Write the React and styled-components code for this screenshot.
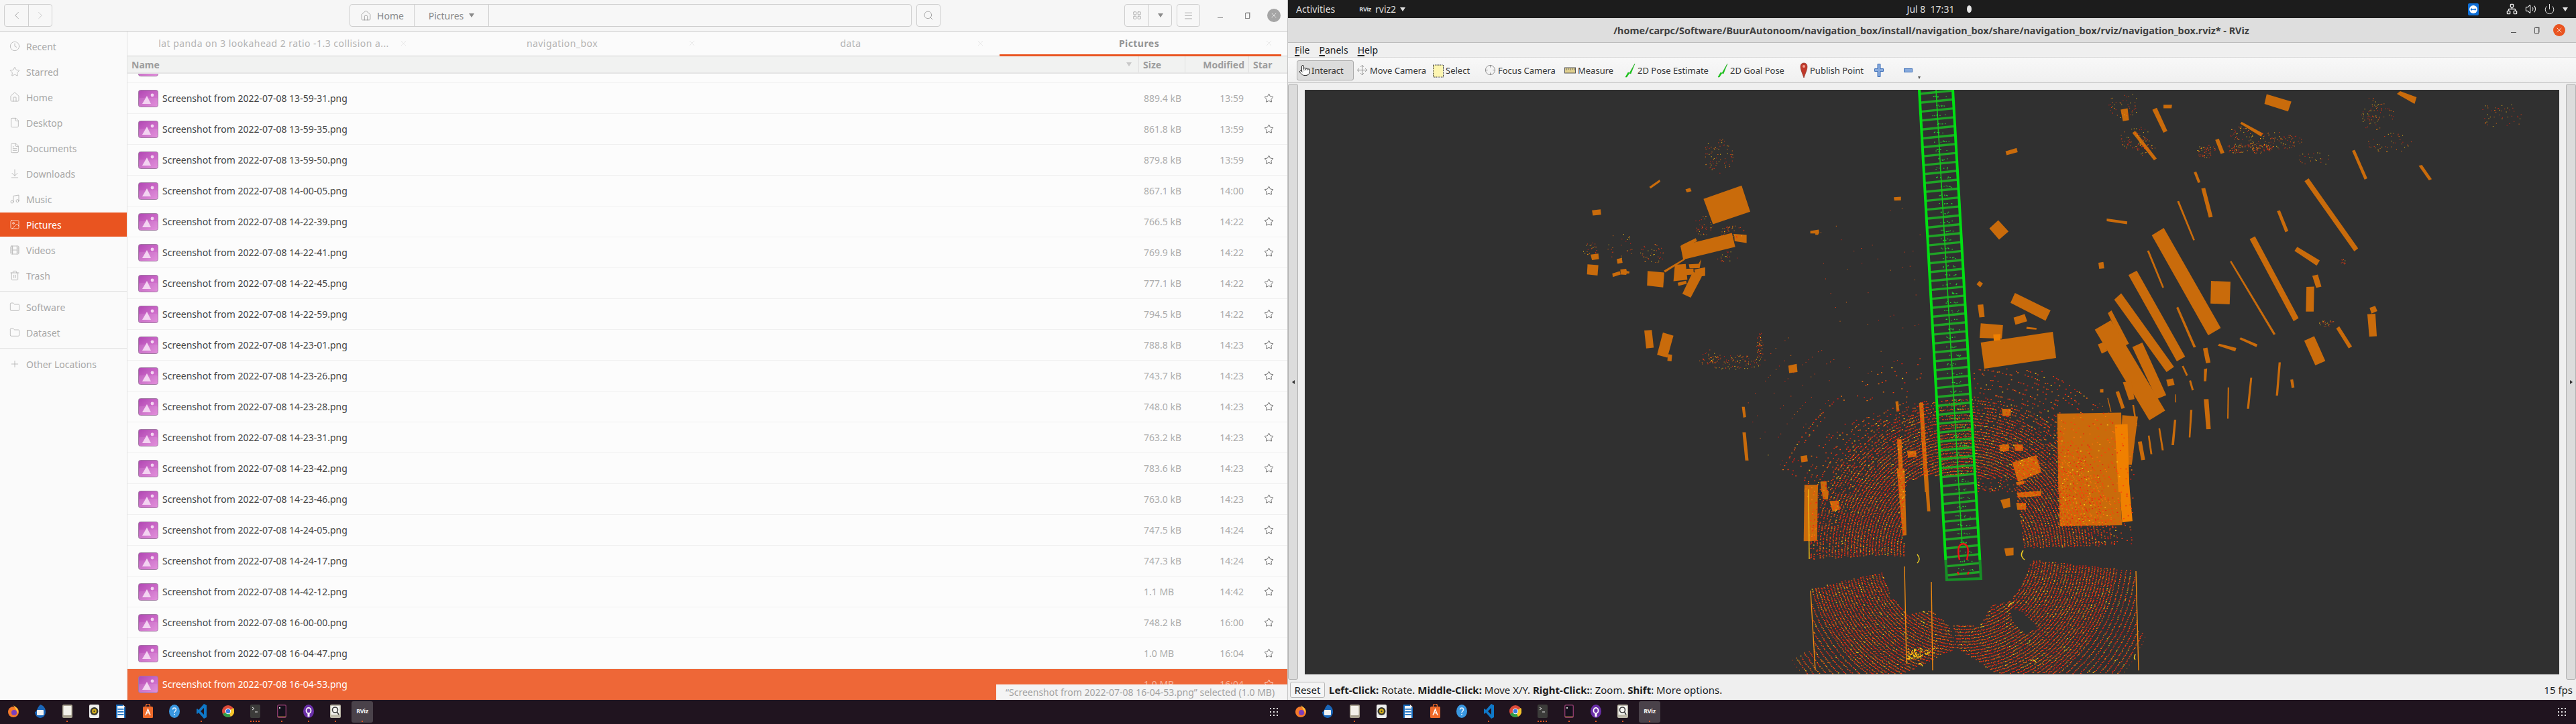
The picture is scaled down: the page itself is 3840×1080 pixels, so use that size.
import React, { useMemo } from "react";
import styled, { createGlobalStyle } from "styled-components";
import {
  ArrowDownToLine, ChevronLeft, ChevronRight, Clock, Crosshair, File, FileText, Film, Folder, House,
  LayoutGrid, Menu, Move, Music, Network, Image as ImageIcon, Plus, Pointer, Power, Search, Star,
  Trash2, Volume2, X,
} from "lucide-react";

const GlobalStyle = createGlobalStyle`
  html, body { margin: 0; padding: 0; background: #20141f; }
  body { font-family: "Noto Sans", "Open Sans", sans-serif; }
  * { box-sizing: border-box; }
`;

const Screen = styled.div`
  width: 3840px;
  height: 1080px;
  display: flex;
  flex-direction: column;
  overflow: hidden;
`;

const Monitors = styled.div`
  height: 1044px;
  display: grid;
  grid-template-columns: 1920px 1920px;
`;

/* ---------- files window ---------- */
const FilesWindow = styled.div`
  position: relative;
  display: flex;
  flex-direction: column;
  height: 1044px;
  overflow: hidden;
  background: #fcfcfc;
  border-right: 1px solid #c4c4c4;
`;

const FilesHeader = styled.div`
  height: 47px;
  flex: none;
  display: flex;
  align-items: center;
  padding: 0 0 0 6px;
  background: #f6f6f6;
  border-bottom: 1px solid #c8c8c8;
`;

const Spacer = styled.div`
  width: ${({ $w }) => $w}px;
  flex: none;
`;

const Group = styled.div`
  display: flex;
  height: 34px;
  border: 1px solid #cfcfcf;
  border-radius: 4px;
  background: #f7f7f7;
  ${({ $w }) => $w && `width: ${$w}px;`}
`;

const GroupCell = styled.div`
  width: ${({ $w }) => $w}px;
  display: flex;
  align-items: center;
  justify-content: center;
  gap: 8px;
  color: ${({ $dim }) => ($dim ? "#bcbcbc" : "#8a8a8a")};
  font-size: 14px;
  & + & { border-left: 1px solid #cfcfcf; }
`;

const Caret = styled.span`
  width: 0;
  height: 0;
  border-left: 4.5px solid transparent;
  border-right: 4.5px solid transparent;
  border-top: 6px solid ${({ $color }) => $color || "#8a8a8a"};
`;

const WinButton = styled.div`
  width: ${({ $w }) => $w || 40}px;
  display: flex;
  justify-content: center;
  align-items: center;
  flex: none;
`;

const MinGlyph = styled.span`
  width: 8px;
  height: 1px;
  margin-top: 6px;
  background: ${({ $color }) => $color};
`;

const MaxGlyph = styled.span`
  width: 7px;
  height: 9px;
  border: 1px solid ${({ $color }) => $color};
  box-shadow: 1px -1px 0 -0.5px ${({ $color }) => $color};
`;

const CloseDisc = styled.span`
  width: ${({ $size }) => $size}px;
  height: ${({ $size }) => $size}px;
  border-radius: 50%;
  background: ${({ $color }) => $color};
  display: flex;
  align-items: center;
  justify-content: center;
  color: #fff;
`;

const FilesBody = styled.div`
  flex: 1;
  min-height: 0;
  display: flex;
`;

const Sidebar = styled.nav`
  width: 190px;
  flex: none;
  padding-top: 3px;
  background: #fafafa;
  border-right: 1px solid #e2e2e2;
`;

const SideItem = styled.div`
  height: 38px;
  border-top: 1px solid transparent;
  border-bottom: 1px solid transparent;
  background-clip: padding-box;
  display: flex;
  align-items: center;
  gap: 9px;
  padding-left: 14px;
  font-size: 14px;
  color: ${({ $active }) => ($active ? "#ffffff" : "#a8a8a8")};
  background-color: ${({ $active }) => ($active ? "#e95420" : "transparent")};
  svg { flex: none; }
`;

const SideRule = styled.div`
  height: 9px;
  position: relative;
  &::after {
    content: "";
    position: absolute;
    left: 0;
    right: 0;
    top: 4px;
    height: 1px;
    background: #e2e2e2;
  }
`;

const Content = styled.div`
  flex: 1;
  min-width: 0;
  display: flex;
  flex-direction: column;
`;

const TabStrip = styled.div`
  height: 37px;
  flex: none;
  display: flex;
  padding-right: 9px;
  background: #fbfbfb;
  border-bottom: 1px solid #cdcdcd;
`;

const Tab = styled.div`
  flex: 1;
  min-width: 0;
  margin-left: 10px;
  height: 37px;
  display: grid;
  grid-template-columns: 30px 1fr 30px;
  align-items: center;
  justify-items: center;
  font-size: 14px;
  letter-spacing: 0.45px;
  padding-right: 4px;
  font-weight: ${({ $active }) => ($active ? 700 : 400)};
  color: ${({ $active }) => ($active ? "#939393" : "#b4b4b4")};
  border-bottom: 3px solid ${({ $active }) => ($active ? "#e95420" : "transparent")};
  svg { color: #dcdcdc; }
`;

const ColumnHeader = styled.div`
  height: 26px;
  flex: none;
  display: grid;
  grid-template-columns: 1fr 69px 95px 58px;
  background: #f1f2f1;
  border-bottom: 2px solid #e5e5e5;
  font-size: 14px;
  font-weight: 700;
  color: #9d9d9d;
`;

const ColumnCell = styled.div`
  display: flex;
  align-items: center;
  padding: 0 6px;
  justify-content: ${({ $right }) => ($right ? "flex-end" : "flex-start")};
  & + & { border-left: 1px solid #dfdfdf; }
`;

const NameCell = styled(ColumnCell)`
  justify-content: space-between;
  padding-right: 10px;
`;

const RowList = styled.div`
  flex: 1;
  min-height: 0;
  overflow: hidden;
`;

const RowScroll = styled.div`
  margin-top: -32px;
`;

const FileRow = styled.div`
  height: 46px;
  display: grid;
  grid-template-columns: 1fr 69px 95px 58px;
  align-items: center;
  font-size: 14px;
  border-bottom: 1px solid ${({ $selected }) => ($selected ? "#ee6737" : "#f0f0f0")};
  background: ${({ $selected }) => ($selected ? "#ee6737" : "transparent")};
`;

const FileName = styled.div`
  display: flex;
  align-items: center;
  gap: 6px;
  padding-left: 16px;
  color: ${({ $selected }) => ($selected ? "#ffffff" : "#454545")};
`;

const SizeCell = styled.div`
  padding-left: 8px;
  color: ${({ $selected }) => ($selected ? "#f7b79f" : "#acacac")};
`;

const TimeCell = styled.div`
  text-align: right;
  padding-right: 7px;
  color: ${({ $selected }) => ($selected ? "#f7b79f" : "#acacac")};
`;

const StarCell = styled.div`
  display: flex;
  justify-content: center;
  padding-left: 2px;
  color: ${({ $selected }) => ($selected ? "#ffffff" : "#4a4a4a")};
`;

const StatusOverlay = styled.div`
  position: absolute;
  right: 0;
  bottom: 0;
  width: 434px;
  height: 23px;
  display: flex;
  align-items: center;
  padding-left: 14px;
  font-size: 14px;
  color: #a3a3a3;
  background: #f4f4f4;
`;

/* ---------- rviz window ---------- */
const RvizWindow = styled.div`
  display: flex;
  flex-direction: column;
  height: 1044px;
  background: #efefef;
`;

const TopBar = styled.div`
  height: 27px;
  flex: none;
  display: grid;
  grid-template-columns: 1fr auto 1fr;
  align-items: center;
  padding: 0 12px;
  background: #1c1c1c;
  color: #dedede;
  font-size: 14px;
`;

const TopLeft = styled.div`
  display: flex;
  align-items: center;
`;

const TopApp = styled.div`
  display: flex;
  align-items: center;
  gap: 6px;
  margin-left: 36px;
`;

const RvizMark = styled.span`
  font-size: 9px;
  font-weight: 700;
  color: ${({ $color }) => $color || "#dedede"};
  letter-spacing: -0.3px;
`;

const TopClock = styled.div`
  display: flex;
  align-items: center;
  gap: 8px;
  margin-left: 22px;
`;

const ClockDot = styled.span`
  width: 7px;
  height: 11px;
  margin-left: 11px;
  border-radius: 50%;
  background: #e6e6e6;
`;

const Tray = styled.div`
  display: flex;
  align-items: center;
  justify-content: flex-end;
  gap: 11px;
  color: #e6e6e6;
`;

const TitleBar = styled.div`
  height: 37px;
  flex: none;
  position: relative;
  display: flex;
  align-items: center;
  justify-content: center;
  padding-right: 2px;
  background: #dedede;
  border-bottom: 1px solid #bcbcbc;
  font-size: 14.4px;
  font-weight: 700;
  color: #404040;
`;

const TitleButtons = styled.div`
  position: absolute;
  right: 0;
  top: 0;
  height: 36px;
  display: flex;
  align-items: center;
  padding-right: 8px;
  gap: 0;
`;

const MenuBar = styled.div`
  height: 22px;
  flex: none;
  display: flex;
  align-items: center;
  gap: 14px;
  padding-left: 10px;
  font-size: 14px;
  color: #222;
  border-bottom: 1px solid #d8d8d8;
`;

const Mnemonic = styled.span`
  text-decoration: underline;
  text-decoration-thickness: 2px;
  text-underline-offset: 2px;
`;

const Toolbar = styled.div`
  height: 38px;
  flex: none;
  display: flex;
  align-items: center;
  position: relative;
  padding-left: 13px;
  background: linear-gradient(#f8f8f8, #f0f0f0);
  border-bottom: 1px solid #bdbdbd;
  font-size: 13px;
  color: #333;
`;

const ToolItem = styled.div`
  width: ${({ $w }) => $w}px;
  flex: none;
  height: 30px;
  display: flex;
  align-items: center;
  gap: ${({ $gap }) => $gap ?? 3}px;
  padding-left: ${({ $pad }) => $pad || 0}px;
  ${({ $active }) => $active && "background: #dcdcdc; border: 1px solid #a9a9a9; border-radius: 3px;"}
`;

const MoreCaret = styled.span`
  position: absolute;
  left: 939px;
  top: 28px;
  width: 0;
  height: 0;
  border-left: 2.5px solid transparent;
  border-right: 2.5px solid transparent;
  border-top: 4px solid #555;
`;

const MainRow = styled.div`
  height: 890px;
  flex: none;
  display: grid;
  grid-template-columns: 15px 1870px 15px;
  column-gap: 10px;
`;

const SideHandle = styled.div`
  margin-top: 1px;
  display: flex;
  align-items: center;
  justify-content: center;
  background: #dcdcdc;
  border: 1px solid #b2b2b2;
  border-radius: 3px;
`;

const HandleArrow = styled.span`
  width: 0;
  height: 0;
  border-top: 3px solid transparent;
  border-bottom: 3px solid transparent;
  ${({ $right }) => ($right ? "border-left" : "border-right")}: 4px solid #333;
`;

const Viewport = styled.div`
  margin-top: 10px;
  height: 872px;
  background: #303030;
  overflow: hidden;
`;

const StatusBar = styled.div`
  height: 30px;
  flex: none;
  display: flex;
  align-items: center;
  padding: 0 5px 0 3px;
  font-size: 15px;
  color: #1c1c1c;
`;

const ResetButton = styled.div`
  width: 52px;
  height: 24px;
  margin-right: 6px;
  display: flex;
  align-items: center;
  justify-content: center;
  background: #f5f5f5;
  border: 1px solid #b8b8b8;
  border-radius: 3px;
`;

const StatusText = styled.div`
  flex: 1;
  b { font-weight: 700; }
`;

/* ---------- dock ---------- */
const DockRow = styled.div`
  height: 36px;
  display: grid;
  grid-template-columns: 1920px 1920px;
  background: #20141f;
`;

const Dock = styled.div`
  display: flex;
  align-items: center;
  height: 36px;
  position: relative;
  margin-left: ${({ $offset }) => $offset || 0}px;
`;

const DockSlot = styled.div`
  position: relative;
  width: 40px;
  height: 36px;
  flex: none;
  display: flex;
  align-items: center;
  justify-content: center;
  padding-bottom: 3px;
`;

const DockTile = styled.div`
  position: absolute;
  left: 4px;
  top: 2px;
  width: 32px;
  height: 32px;
  border-radius: 3px;
  background: #4a424a;
`;

const DockGlyph = styled.span`
  position: relative;
  display: flex;
`;

const DockDots = styled.div`
  position: absolute;
  bottom: 3px;
  left: 0;
  right: 0;
  display: flex;
  justify-content: center;
  gap: 2px;
`;

const DockDot = styled.span`
  width: 2px;
  height: 2px;
  background: #e95420;
`;

const AppGrid = styled.div`
  margin-left: auto;
  margin-right: 15px;
  display: grid;
  grid-template-columns: repeat(3, 2.5px);
  gap: 2.5px;
`;

const GridDot = styled.span`
  width: 2.5px;
  height: 2.5px;
  background: #e6e6e6;
`;

/* ---------- data ---------- */
const rows = [
  ["13-59-20", "", ""],
  ["13-59-31", "889.4 kB", "13:59"],
  ["13-59-35", "861.8 kB", "13:59"],
  ["13-59-50", "879.8 kB", "13:59"],
  ["14-00-05", "867.1 kB", "14:00"],
  ["14-22-39", "766.5 kB", "14:22"],
  ["14-22-41", "769.9 kB", "14:22"],
  ["14-22-45", "777.1 kB", "14:22"],
  ["14-22-59", "794.5 kB", "14:22"],
  ["14-23-01", "788.8 kB", "14:23"],
  ["14-23-26", "743.7 kB", "14:23"],
  ["14-23-28", "748.0 kB", "14:23"],
  ["14-23-31", "763.2 kB", "14:23"],
  ["14-23-42", "783.6 kB", "14:23"],
  ["14-23-46", "763.0 kB", "14:23"],
  ["14-24-05", "747.5 kB", "14:24"],
  ["14-24-17", "747.3 kB", "14:24"],
  ["14-42-12", "1.1 MB", "14:42"],
  ["16-00-00", "748.2 kB", "16:00"],
  ["16-04-47", "1.0 MB", "16:04"],
  ["16-04-53", "1.0 MB", "16:04"],
];

const sideTop = [
  ["Recent", Clock], ["Starred", Star], ["Home", House], ["Desktop", File], ["Documents", FileText],
  ["Downloads", ArrowDownToLine], ["Music", Music], ["Pictures", ImageIcon], ["Videos", Film], ["Trash", Trash2],
];

const dockApps = [
  ["firefox", 0], ["mail", 0], ["files", 1], ["sound", 0], ["writer", 0], ["store", 0], ["help", 0],
  ["code", 1], ["chrome", 0], ["term", 4], ["dark", 1], ["github", 1], ["finder", 1], ["rviz", 1],
];

/* ---------- 3d view: obstacles in crop coordinates, mapped by the group transform ---------- */
const z9 = "translate(2250 134) scale(0.4146 0.3827)";
const z10 = "translate(2900 134) scale(0.4146 0.3827)";
const z7 = "translate(2400 700) scale(0.574 0.3333)";
const z4 = "translate(2880 0) scale(0.6122 0.3333)";

const boxes9 = [
  "503,378 540,350 543,358 508,385", "633,388 650,382 655,395 638,400", "297,470 328,466 330,487 300,490",
  "698,425 835,373 866,475 732,524", "615,608 800,558 812,612 625,662", "617,606 670,578 675,590 625,615",
  "808,562 853,565 853,597 810,590", "292,642 320,638 322,660 297,664", "386,660 404,655 407,674 389,678",
  "281,680 320,683 317,724 279,719", "370,716 397,707 400,720 372,730",
  "399,700 420,698 422,706 432,708 431,716 422,716 420,721 400,720", "497,706 557,712 553,770 495,763",
  "555,705 628,658 632,662 560,712", "595,682 634,679 640,740 590,746", "635,698 662,697 662,720 635,722",
  "645,680 680,678 690,660 684,695 648,696", "665,700 704,692 704,725 670,730", "605,752 635,744 638,756 608,764",
  "660,708 692,728 652,810 622,795", "485,938 512,936 519,1005 492,1008", "552,946 590,958 568,1044 531,1033",
  "570,1030 585,1033 583,1058 568,1056", "1003,1075 1033,1068 1036,1100 1006,1104",
  "1082,550 1112,545 1114,556 1110,565 1100,565 1100,560 1082,560", "1382,419 1408,417 1408,431 1384,432",
  "836,1235 846,1235 851,1275 841,1278", "838,1335 850,1335 860,1445 848,1445",
  "1047,1428 1070,1424 1073,1448 1050,1452", "1062,1542 1110,1540 1108,1568 1060,1568",
  "1118,1528 1140,1526 1142,1568 1122,1568", "1388,1215 1398,1213 1402,1252 1392,1254",
  "1394,1362 1410,1362 1418,1568 1404,1568", "1473,1220 1488,1218 1508,1568 1494,1568",
  "1430,1410 1462,1406 1464,1430 1434,1434",
];

const boxes10 = [
  "216,240 256,227 260,243 220,255", "630,77 655,72 660,118 638,122", "744,78 760,70 798,160 784,167",
  "784,58 815,58 813,72 784,72", "672,168 682,160 760,268 750,275", "1155,17 1244,46 1232,84 1147,55",
  "1060,132 1065,125 1142,170 1135,182", "970,195 983,190 1003,245 990,250", "1462,238 1472,234 1517,345 1507,350",
  "893,322 902,318 917,360 908,363", "920,385 934,382 961,495 947,498", "833,435 840,433 897,585 891,587",
  "580,502 654,513 653,524 580,512", "1192,473 1203,470 1233,550 1222,555", "1291,356 1306,345 1484,618 1470,630",
  "158,540 190,508 227,552 193,584", "1255,628 1265,612 1346,665 1335,685", "742,567 785,538 990,928 945,957",
  "725,628 732,626 786,770 780,772", "1094,582 1113,571 1270,890 1252,902", "1023,670 1028,666 1187,952 1180,956",
  "550,674 568,671 571,696 553,698", "112,758 122,745 135,755 125,770", "658,722 688,705 862,1040 832,1058",
  "1319,725 1339,720 1352,767 1333,772", "1298,768 1326,767 1324,864 1296,864", "955,745 1025,748 1022,836 953,833",
  "607,818 632,793 822,1080 795,1100", "234,830 250,792 378,860 360,900", "116,838 136,836 141,885 122,887",
  "245,888 285,874 294,902 252,916", "830,850 837,845 901,1003 892,1005", "584,870 597,860 660,990 640,1000",
  "292,924 328,928 327,935 291,932", "127,910 207,917 203,970 123,967", "127,985 386,943 398,1045 140,1087",
  "537,935 595,898 790,1250 733,1288", "548,992 573,982 582,1018 562,1028", "672,1003 708,985 794,1190 760,1205",
  "1057,972 1062,965 1122,992 1118,1003", "979,997 985,990 1046,1006 1042,1020", "926,1008 942,1005 953,1063 937,1066",
  "1290,978 1326,960 1366,1057 1330,1074", "1405,930 1416,922 1462,1000 1450,1008", "1525,850 1545,842 1553,862 1532,872",
  "1517,875 1546,873 1551,960 1524,962", "850,1078 856,1075 872,1112 866,1116", "930,1088 941,1086 938,1136 929,1136",
  "876,1134 883,1132 893,1170 886,1172", "794,1130 818,1125 824,1150 800,1156", "825,1187 828,1187 830,1218 826,1218",
  "556,1167 568,1166 568,1180 556,1180", "612,1178 624,1174 645,1240 633,1244", "638,1140 668,1135 680,1205 660,1210",
  "582,1202 585,1201 597,1255 594,1256", "672,1228 678,1228 690,1310 684,1310", "1198,1062 1206,1062 1196,1192 1188,1192",
  "1096,1122 1103,1122 1092,1243 1084,1243", "1240,1130 1250,1128 1255,1160 1245,1163", "1015,1160 1020,1160 1018,1282 1013,1282",
  "929,1206 946,1205 954,1322 938,1323", "880,1248 888,1248 881,1355 875,1355", "822,1286 830,1286 822,1385 813,1385",
  "766,1320 772,1319 785,1405 778,1405", "728,1348 734,1347 744,1420 737,1420", "692,1372 706,1370 718,1442 704,1444",
  "203,1244 235,1243 235,1270 206,1272", "402,1262 632,1258 640,1568 406,1568", "636,1268 692,1274 670,1462 626,1460",
  "193,1385 228,1380 230,1408 197,1410", "248,1382 278,1382 280,1408 250,1408", "240,1452 326,1425 345,1490 260,1525",
  "253,1530 280,1524 283,1534 258,1542",
];

const bright10 = ["609,1305 655,1303 662,1568 622,1568", "172,954 198,952 198,976 174,978"];

const boxes7 = [
  "1165,0 1320,0 1330,250 1168,255", "505,70 540,70 538,320 503,322", "548,55 562,55 562,95 550,100",
  "550,97 568,97 566,135 553,135", "570,142 594,140 597,180 578,190", "745,0 765,0 770,295 760,297",
  "815,0 825,0 832,188 824,188", "1052,0 1100,0 1118,15 1060,55", "1055,60 1076,50 1076,65 1058,72",
  "1014,138 1038,128 1040,168 1022,176", "1056,105 1120,97 1120,120 1060,126", "1055,150 1080,150 1080,180 1058,182",
  "1024,355 1048,350 1048,385 1028,388",
];

const bright7 = ["1320,0 1345,0 1357,232 1330,238"];

const boxes4 = ["1132,420 1140,408 1180,435 1175,465", "1185,742 1193,738 1217,802 1210,807"];

const map7 = ([x, y]) => [2400 + x * 0.574, 700 + y / 3];
const map9 = ([x, y]) => [2250 + x * 0.4146, 134 + y * 0.3827];
const map10 = ([x, y]) => [2900 + x * 0.4146, 134 + y * 0.3827];
const map4 = ([x, y]) => [2880 + x * 0.6122, y / 3];

const zones = [
  { fade: true, p: 1, poly: [[515, 405], [510, 100], [455, 0], [460, -30], [600, -200], [760, -300], [900, -310], [900, 30], [820, 30], [770, 60], [760, 200], [765, 390], [700, 385]].map(map7) },
  { fade: true, p: 1, poly: [[900, -310], [1100, -350], [1400, -200], [1360, 0], [1357, 340], [1110, 352], [1075, 350], [1060, 170], [1050, 40], [900, 30]].map(map7) },
  { p: 1, poly: [[520, 535], [710, 460], [725, 560], [770, 650], [830, 630], [880, 700], [900, 800], [760, 917], [450, 917], [470, 850], [530, 800]].map(map7) },
  { p: 1, poly: [[1095, 405], [1360, 455], [1370, 720], [1410, 760], [1370, 917], [1000, 917], [900, 800], [890, 700], [960, 700], [990, 610], [1040, 590], [1080, 480]].map(map7) },
  { p: 0.42, poly: [[880, 830], [1160, 1040], [1170, 1220], [1000, 1490], [930, 1470], [820, 1215], [1000, 900]].map(map9) },
  { p: 0.12, poly: [[1100, 500], [1480, 400], [1480, 1200], [1170, 1220]].map(map9) },
  { p: 0.35, poly: [[100, 1080], [400, 1100], [650, 1300], [400, 1568], [100, 1568]].map(map10) },
];

const hole = [[1040, 620], [1070, 640], [1110, 710], [1075, 735], [1040, 670]].map(map7);

const clusters = [
  [map9, 750, 260, 55, 70, 70], [map9, 700, 530, 35, 40, 35], [map9, 800, 555, 45, 25, 40], [map9, 780, 650, 40, 25, 20],
  [map9, 510, 640, 45, 40, 40], [map9, 400, 610, 50, 55, 24], [map9, 290, 620, 28, 28, 22], [map9, 800, 1060, 120, 30, 110],
  [map9, 900, 1000, 12, 65, 50], [map9, 730, 1040, 40, 28, 18], [map10, 640, 60, 55, 50, 45], [map10, 680, 190, 55, 50, 70],
  [map10, 720, 230, 35, 35, 25], [map10, 940, 240, 38, 28, 55], [map10, 1090, 230, 85, 22, 120], [map10, 1180, 200, 105, 35, 100],
  [map10, 1060, 170, 38, 28, 35], [map10, 1330, 270, 65, 28, 22], [map10, 1530, 80, 38, 55, 30], [map10, 1370, 910, 28, 16, 25],
  [map10, 1430, 670, 10, 10, 10], [map4, 1385, 515, 65, 55, 45], [map4, 1080, 520, 45, 65, 45], [map4, 1115, 640, 55, 45, 40],
];

const inside = (x, y, poly) => {
  let hit = false;
  for (let i = 0, j = poly.length - 1; i < poly.length; j = i++) {
    const [xi, yi] = poly[i];
    const [xj, yj] = poly[j];
    if (yi > y !== yj > y && x < ((xj - xi) * (y - yi)) / (yj - yi) + xi) hit = !hit;
  }
  return hit;
};

const makeRandom = (seed) => () => {
  seed = (seed + 0x6d2b79f5) | 0;
  let t = Math.imul(seed ^ (seed >>> 15), 1 | seed);
  t = (t + Math.imul(t ^ (t >>> 7), 61 | t)) ^ t;
  return ((t ^ (t >>> 14)) >>> 0) / 4294967296;
};

// scan rings round the car plus loose clusters, one path per colour and dot size
const buildCloud = () => {
  const rnd = makeRandom(4242);
  const palette = ["#ff3c0e", "#ff720a", "#f01c10", "#ffc814"];
  const coarse = palette.map(() => []);
  const fine = palette.map(() => []);
  const put = (target, x, y, warm, len) => {
    const pick = rnd();
    let slot = 0;
    if (pick > 0.95 - warm) slot = 3;
    else if (pick > 0.7 - warm) slot = 1;
    else if (pick < 0.22) slot = 2;
    target[slot].push(`M${x.toFixed(1)} ${y.toFixed(1)}h${len}`);
  };
  const cx = 2925;
  const cy = 823;
  for (let r = 70; r < 640; r += r < 230 ? 4.6 : r < 300 ? 7 : 22) {
    const ds = r < 230 ? 2.3 : r < 300 ? 2.8 : 6;
    for (let a = 0; a < Math.PI * 2; a += ds / r) {
      const x = cx + r * Math.cos(a) + (rnd() - 0.5) * 1.4;
      const y = cy + r * Math.sin(a) + (rnd() - 0.5) * 1.4;
      if (y > 1005 || inside(x, y, hole)) continue;
      const zone = zones.find((z) => inside(x, y, z.poly));
      if (!zone) continue;
      // upper sectors thin out with range
      const falloff = zone.fade ? Math.max(0.3, Math.min(1, 1 - (r - 170) / 120)) : 1;
      if (rnd() < zone.p * falloff) put(r < 300 ? coarse : fine, x, y, 0, r < 300 ? 1.8 : 1);
    }
  }
  clusters.forEach(([map, x, y, rx, ry, count]) => {
    for (let i = 0; i < count; i++) {
      const a = rnd() * Math.PI * 2;
      const d = Math.sqrt(rnd());
      const [px, py] = map([x + Math.cos(a) * d * rx, y + Math.sin(a) * d * ry]);
      put(fine, px, py, 0.2, 1);
    }
  });
  // warm hatch in front of the car
  for (let i = 0; i < 90; i++) {
    const u = rnd();
    const [px, py] = map7([770 + rnd() * (85 - u * 60), 800 + u * 50]);
    coarse[3].push(`M${px.toFixed(1)} ${py.toFixed(1)}h1.8`);
  }
  return [
    ...coarse.map((parts, i) => ({ key: `c${i}`, color: palette[i], width: 1.3, d: parts.join("") })),
    ...fine.map((parts, i) => ({ key: `f${i}`, color: palette[i], width: 1, d: parts.join("") })),
  ];
};

const buildPath = () => {
  const rnd = makeRandom(77);
  const railL = (y) => 2861 + ((y - 134) * 41) / 731;
  const railR = (y) => 2911 + ((y - 134) * 42) / 729;
  const rungs = [];
  const marks = [];
  for (let y = 138; y < 866; y += 13.3) {
    rungs.push({ x1: railL(y), y1: y + 2, x2: railR(y), y2: y - 3 });
    const mid = (railL(y) + railR(y)) / 2;
    for (let i = 0; i < 7; i++) marks.push(`M${(mid - 8 + rnd() * 22).toFixed(1)} ${(y - 8 + rnd() * 3).toFixed(1)}h1.4`);
  }
  return { rungs, marks: marks.join(""), railL, railR };
};

const CloudView = () => {
  const cloud = useMemo(buildCloud, []);
  const path = useMemo(buildPath, []);
  return (
    <svg width="1870" height="872" viewBox="1945 134 1870 872" style={{ display: "block" }}>
      <g fill="#c96b0b">
        <g transform={z9}>{boxes9.map((p) => <polygon key={p} points={p} />)}</g>
        <g transform={z10}>{boxes10.map((p) => <polygon key={p} points={p} />)}</g>
        <g transform={z7}>{boxes7.map((p) => <polygon key={p} points={p} />)}</g>
        <g transform={z4}>{boxes4.map((p) => <polygon key={p} points={p} />)}</g>
      </g>
      <g fill="#f08000">
        <g transform={z10}>{bright10.map((p) => <polygon key={p} points={p} />)}</g>
        <g transform={z7}>{bright7.map((p) => <polygon key={p} points={p} />)}</g>
      </g>
      <g fill="none">
        {cloud.map((c) => <path key={c.key} d={c.d} stroke={c.color} strokeWidth={c.width} />)}
      </g>
      <g stroke="#f08a10" strokeWidth="1.4" fill="none">
        <path d="M2699 881 L2706 1000" />
        <path d="M2839 845 L2842 990" />
        <path d="M2879 868 L2881 1000" />
        <path d="M3184 852 L3188 1000" />
        <path d="M2696 730 L2697 834" stroke="#f4c012" />
      </g>
      <g stroke="#1fa426" strokeWidth="3.4">
        {path.rungs.map((r) => <line key={r.y1} x1={r.x1} y1={r.y1} x2={r.x2} y2={r.y2} />)}
      </g>
      <line x1="2886" y1="134" x2="2925" y2="813" stroke="#12c81a" strokeWidth="1.6" />
      <path d={path.marks} stroke="#20e030" strokeWidth="1.2" fill="none" />
      <g stroke="#00e012" strokeWidth="4" fill="none">
        <line x1="2861" y1="134" x2={path.railL(835)} y2="835" />
        <line x1="2911" y1="134" x2={path.railR(835)} y2="835" />
      </g>
      <g stroke="#178f26" strokeWidth="4" fill="none">
        <path d={`M${path.railL(835)} 835 L2902 865 L2953 863 L${path.railR(835)} 835`} />
      </g>
      <g stroke="#f01414" strokeWidth="2.4" fill="none">
        <path d="M2921 835 C2917 818 2920 812 2926 811" />
        <path d="M2932 835 C2936 818 2933 812 2926 811" />
        <path d="M2918 853 l2 4 M2935 853 l-2 4" />
      </g>
      <g stroke="#f2d020" strokeWidth="1.4" fill="none">
        <path d="M2858 827 q6 7 0 13" />
        <path d="M3016 821 q-6 8 2 14" />
        <path d="M2994 905 q2 -6 8 -6" />
        <path d="M2860 990 q4 -2 6 4" />
        <path d="M3027 986 q4 -4 8 2" />
        <path d="M3183 976 q-3 5 0 8" />
      </g>
    </svg>
  );
};

/* ---------- small drawings ---------- */
const ImageFileIcon = () => (
  <svg width="30" height="26" viewBox="0 0 30 26">
    <defs>
      <linearGradient id="tile" x1="0" y1="0" x2="1" y2="1">
        <stop offset="0" stopColor="#b147b3" />
        <stop offset="1" stopColor="#e084d8" />
      </linearGradient>
    </defs>
    <rect x="0.5" y="0.5" width="29" height="25" rx="3" fill="url(#tile)" stroke="#a07aa2" />
    <rect x="1" y="12" width="28" height="13" rx="2" fill="#ffffff" opacity="0.1" />
    <circle cx="21" cy="8" r="2.4" fill="#f3d3f1" />
    <path d="M6 21 L13 9 L19 21 Z" fill="#f3d3f1" />
  </svg>
);

const ToolHand = () => <Pointer size={18} strokeWidth={1.3} color="#222" fill="#fff" />;
const ToolMove = () => <Move size={17} strokeWidth={1.1} color="#777" />;
const ToolFocus = () => <Crosshair size={17} strokeWidth={1.1} color="#777" />;

const ToolSelect = () => (
  <svg width="16" height="24" viewBox="0 0 16 24">
    <rect x="0.5" y="4" width="15" height="18" fill="#fdf6b2" stroke="#333" strokeDasharray="1.5 1" />
  </svg>
);

const ToolMeasure = () => (
  <svg width="17" height="12" viewBox="0 0 17 12">
    <rect x="0.5" y="2" width="16" height="8" fill="#e0d090" stroke="#555" />
    <path d="M3 3v3M6 3v2M9 3v3M12 3v2M15 3v3" stroke="#555" strokeWidth="0.8" />
  </svg>
);

const ToolArrow = () => (
  <svg width="16" height="24" viewBox="0 0 16 24">
    <path d="M1 22 L5 15 L7 16 L15 2 L9 17 L7 16 L3 22 Z" fill="#14d214" stroke="#0a9a0a" strokeWidth="0.5" />
  </svg>
);

const ToolPin = () => (
  <svg width="12" height="24" viewBox="0 0 12 24">
    <path d="M6 1 C2 1 1 4 1 7 C1 11 4 17 6 23 C8 17 11 11 11 7 C11 4 10 1 6 1 Z" fill="#c0392b" stroke="#7d2a20" strokeWidth="0.6" />
    <circle cx="6" cy="6" r="2" fill="#f0a090" />
  </svg>
);

const ToolPlus = () => (
  <svg width="14" height="20" viewBox="0 0 14 20">
    <path d="M5 0.5h4v7h4.5v4H9v8H5v-8H0.5v-4H5z" fill="#86a9dc" stroke="#3d6fb8" />
  </svg>
);

const ToolMinus = () => (
  <svg width="13" height="8" viewBox="0 0 13 8">
    <rect x="0.5" y="1.5" width="12" height="5" fill="#86a9dc" stroke="#3d6fb8" />
  </svg>
);

const DockIcon = ({ kind }) => {
  switch (kind) {
    case "firefox":
      return (
        <svg width="18" height="20" viewBox="0 0 18 20">
          <circle cx="9" cy="11" r="8" fill="#f5792a" />
          <path d="M9 1 C14 4 17 8 16 13 C13 8 12 5 9 1 Z" fill="#ffc83a" />
          <circle cx="10" cy="12" r="4" fill="#7a3fbd" />
        </svg>
      );
    case "mail":
      return (
        <svg width="18" height="22" viewBox="0 0 18 22">
          <path d="M9 1 C15 3 17 7 17 12 C17 17 13 21 9 21 C5 21 1 17 1 12 C4 12 4 6 9 1 Z" fill="#1a66b8" />
          <rect x="4" y="9" width="10" height="8" rx="1" fill="#f2f2f2" />
        </svg>
      );
    case "files":
      return (
        <svg width="15" height="20" viewBox="0 0 15 20">
          <rect width="15" height="20" rx="2" fill="#a8a290" />
          <rect x="1.5" y="2" width="12" height="14" rx="1" fill="#f3f1ea" />
        </svg>
      );
    case "sound":
      return (
        <svg width="15" height="20" viewBox="0 0 15 20">
          <rect width="15" height="20" rx="2" fill="#efefef" />
          <circle cx="7.5" cy="10" r="6" fill="#3a3a30" />
          <circle cx="7.5" cy="10" r="3.4" fill="#d8b21c" />
          <circle cx="7.5" cy="10" r="1.2" fill="#3a3a30" />
        </svg>
      );
    case "writer":
      return (
        <svg width="14" height="20" viewBox="0 0 14 20">
          <path d="M0 0h10l4 4v16H0z" fill="#f4f8fc" />
          <path d="M2.5 6h9v1.8h-9zM2.5 10h9v1.8h-9zM2.5 14h9v1.8h-9z" fill="#1a6fc0" />
          <path d="M0 0h10v2H2v18H0z" fill="#1a6fc0" />
          <path d="M14 4v16h-2V4z" fill="#1a6fc0" />
        </svg>
      );
    case "store":
      return (
        <svg width="15" height="21" viewBox="0 0 15 21">
          <rect y="4" width="15" height="17" rx="1.5" fill="#ef6a2a" />
          <path d="M4.5 6V3a3 3 0 0 1 6 0v3" fill="none" stroke="#ef6a2a" strokeWidth="1.4" />
          <path d="M4 17 L7.5 8 L11 17 M5.5 13.5h4" fill="none" stroke="#fff" strokeWidth="1.5" />
        </svg>
      );
    case "help":
      return (
        <svg width="16" height="20" viewBox="0 0 16 20">
          <ellipse cx="8" cy="10" rx="8" ry="10" fill="#3a97e0" />
          <path d="M5.5 7.5 C5.5 4 10.5 4 10.5 7.5 C10.5 10 8 9.5 8 12.5" fill="none" stroke="#e8f4ff" strokeWidth="1.5" />
          <rect x="7.2" y="14" width="1.6" height="1.6" fill="#e8f4ff" />
        </svg>
      );
    case "code":
      return (
        <svg width="15" height="22" viewBox="0 0 15 22">
          <path d="M11 0 L15 2 V20 L11 22 L3 13 L1 15 L0 14 V8 L1 7 L3 9 Z M11 6 L6 11 L11 16 Z" fill="#0f78c8" fillRule="evenodd" />
        </svg>
      );
    case "chrome":
      return (
        <svg width="18" height="20" viewBox="0 0 18 20">
          <circle cx="9" cy="10" r="9" fill="#dd4b3a" />
          <path d="M9 10 L1 14 A9 9 0 0 0 13 18 Z" fill="#2f9e48" />
          <path d="M9 10 L13 18 A9 9 0 0 0 17 5 Z" fill="#f6c52a" />
          <circle cx="9" cy="10" r="4.2" fill="#fff" />
          <circle cx="9" cy="10" r="3.2" fill="#3a7be0" />
        </svg>
      );
    case "term":
      return (
        <svg width="15" height="20" viewBox="0 0 15 20">
          <rect width="15" height="20" rx="2" fill="#3c3c3a" />
          <path d="M3 4 L6 6 L3 8 M7 11h4" fill="none" stroke="#e8e8e8" strokeWidth="1" />
        </svg>
      );
    case "dark":
      return (
        <svg width="14" height="20" viewBox="0 0 14 20">
          <rect x="0.7" y="0.7" width="12.6" height="18.6" rx="2" fill="#15101c" stroke="#8a3a6a" strokeWidth="1.4" />
          <path d="M3 4h2v2H3z" fill="#ddd" />
          <path d="M1 18h12" stroke="#a87a3a" />
        </svg>
      );
    case "github":
      return (
        <svg width="16" height="20" viewBox="0 0 16 20">
          <ellipse cx="8" cy="10" rx="8" ry="10" fill="#6a2fa8" />
          <ellipse cx="8" cy="9" rx="4.4" ry="5" fill="#fff" />
          <ellipse cx="8" cy="9" rx="2.6" ry="3.2" fill="#6a2fa8" />
          <rect x="6.5" y="13" width="3" height="5" fill="#fff" />
        </svg>
      );
    case "finder":
      return (
        <svg width="16" height="20" viewBox="0 0 16 20">
          <rect width="16" height="20" rx="2" fill="#bdb9aa" />
          <rect x="1.5" y="2" width="13" height="13" fill="#f6f5f1" />
          <circle cx="7.5" cy="8" r="4" fill="none" stroke="#3c3c3c" strokeWidth="1.6" />
          <path d="M10.5 11 L13 15" stroke="#3c3c3c" strokeWidth="1.6" />
        </svg>
      );
    default:
      return <RvizMark $color="#f2f2f2">RViz</RvizMark>;
  }
};

const DockBar = ({ offset }) => (
  <Dock $offset={offset}>
    {dockApps.map(([kind, dots]) => (
      <DockSlot key={kind}>
        {kind === "rviz" && <DockTile />}
        <DockGlyph>
          <DockIcon kind={kind} />
        </DockGlyph>
        {dots > 0 && (
          <DockDots>
            {Array.from({ length: dots }, (_, i) => <DockDot key={i} />)}
          </DockDots>
        )}
      </DockSlot>
    ))}
    <AppGrid>
      {Array.from({ length: 9 }, (_, i) => <GridDot key={i} />)}
    </AppGrid>
  </Dock>
);

const TeamViewer = () => (
  <svg width="16" height="18" viewBox="0 0 16 18">
    <rect width="16" height="18" rx="2" fill="#0e6fd8" />
    <circle cx="8" cy="9" r="6" fill="#fff" />
    <path d="M3.5 9 L6 7 V8.2 H10 V7 L12.5 9 L10 11 V9.8 H6 V11 Z" fill="#0e6fd8" />
  </svg>
);

const FilesPanel = () => (
  <FilesWindow>
    <FilesHeader>
      <Group>
        <GroupCell $w={35}><ChevronLeft size={18} strokeWidth={1} /></GroupCell>
        <GroupCell $w={35} $dim><ChevronRight size={18} strokeWidth={1} /></GroupCell>
      </Group>
      <Spacer $w={443} />
      <Group $w={839}>
        <GroupCell $w={95}><House size={17} strokeWidth={1} />Home</GroupCell>
        <GroupCell $w={111}>Pictures<Caret /></GroupCell>
        <GroupCell $w={1} />
      </Group>
      <Spacer $w={7} />
      <Group>
        <GroupCell $w={34}><Search size={16} strokeWidth={1.1} /></GroupCell>
      </Group>
      <Spacer $w={274} />
      <Group>
        <GroupCell $w={35}><LayoutGrid size={14} strokeWidth={1.1} /></GroupCell>
        <GroupCell $w={34}><Caret /></GroupCell>
      </Group>
      <Spacer $w={7} />
      <Group>
        <GroupCell $w={33}><Menu size={15} strokeWidth={1} /></GroupCell>
      </Group>
      <Spacer $w={10} />
      <WinButton><MinGlyph $color="#8a8a8a" /></WinButton>
      <WinButton><MaxGlyph $color="#8a8a8a" /></WinButton>
      <WinButton><CloseDisc $size={20} $color="#a5a5a5"><X size={12} strokeWidth={1.4} /></CloseDisc></WinButton>
    </FilesHeader>
    <FilesBody>
      <Sidebar>
        {sideTop.map(([label, Icon]) => (
          <SideItem key={label} $active={label === "Pictures"}>
            <Icon size={16} strokeWidth={1.1} />
            {label}
          </SideItem>
        ))}
        <SideRule />
        <SideItem><Folder size={16} strokeWidth={1.1} />Software</SideItem>
        <SideItem><Folder size={16} strokeWidth={1.1} />Dataset</SideItem>
        <SideRule />
        <SideItem><Plus size={16} strokeWidth={1.1} />Other Locations</SideItem>
      </Sidebar>
      <Content>
        <TabStrip>
          <Tab><span />lat panda on 3 lookahead 2 ratio -1.3 collision a...<X size={13} strokeWidth={1.2} /></Tab>
          <Tab><span />navigation_box<X size={13} strokeWidth={1.2} /></Tab>
          <Tab><span />data<X size={13} strokeWidth={1.2} /></Tab>
          <Tab $active><span />Pictures<X size={13} strokeWidth={1.2} /></Tab>
        </TabStrip>
        <ColumnHeader>
          <NameCell>Name<Caret $color="#c8c8c8" /></NameCell>
          <ColumnCell>Size</ColumnCell>
          <ColumnCell $right>Modified</ColumnCell>
          <ColumnCell>Star</ColumnCell>
        </ColumnHeader>
        <RowList>
          <RowScroll>
            {rows.map(([stamp, size, time]) => {
              const selected = stamp === "16-04-53";
              return (
                <FileRow key={stamp} $selected={selected}>
                  <FileName $selected={selected}>
                    <ImageFileIcon />
                    {size && `Screenshot from 2022-07-08 ${stamp}.png`}
                  </FileName>
                  <SizeCell $selected={selected}>{size}</SizeCell>
                  <TimeCell $selected={selected}>{time}</TimeCell>
                  <StarCell $selected={selected}><Star size={15} strokeWidth={1.3} /></StarCell>
                </FileRow>
              );
            })}
          </RowScroll>
        </RowList>
      </Content>
    </FilesBody>
    <StatusOverlay>“Screenshot from 2022-07-08 16-04-53.png” selected  (1.0 MB)</StatusOverlay>
  </FilesWindow>
);

const RvizPanel = () => (
  <RvizWindow>
    <TopBar>
      <TopLeft>
        Activities
        <TopApp><RvizMark>RViz</RvizMark>rviz2<Caret $color="#dedede" /></TopApp>
      </TopLeft>
      <TopClock>Jul 8&nbsp;&nbsp;17:31<ClockDot /></TopClock>
      <Tray>
        <TeamViewer />
        <Spacer $w={19} />
        <Network size={17} strokeWidth={2} />
        <Volume2 size={17} strokeWidth={1.6} />
        <Power size={17} strokeWidth={1.4} />
        <Caret $color="#e6e6e6" />
      </Tray>
    </TopBar>
    <TitleBar>
      /home/carpc/Software/BuurAutonoom/navigation_box/install/navigation_box/share/navigation_box/rviz/navigation_box.rviz* - RViz
      <TitleButtons>
        <WinButton $w={34}><MinGlyph $color="#555" /></WinButton>
        <WinButton $w={34}><MaxGlyph $color="#555" /></WinButton>
        <WinButton $w={34}><CloseDisc $size={18} $color="#e95420"><X size={12} strokeWidth={1.6} /></CloseDisc></WinButton>
      </TitleButtons>
    </TitleBar>
    <MenuBar>
      <span><Mnemonic>F</Mnemonic>ile</span>
      <span><Mnemonic>P</Mnemonic>anels</span>
      <span><Mnemonic>H</Mnemonic>elp</span>
    </MenuBar>
    <Toolbar>
      <ToolItem $w={85} $pad={2} $gap={1} $active><ToolHand />Interact</ToolItem>
      <ToolItem $w={118} $pad={4}><ToolMove />Move Camera</ToolItem>
      <ToolItem $w={77}><ToolSelect />Select</ToolItem>
      <ToolItem $w={119}><ToolFocus />Focus Camera</ToolItem>
      <ToolItem $w={90}><ToolMeasure />Measure</ToolItem>
      <ToolItem $w={138}><ToolArrow />2D Pose Estimate</ToolItem>
      <ToolItem $w={120}><ToolArrow />2D Goal Pose</ToolItem>
      <ToolItem $w={108} $pad={3}><ToolPin />Publish Point</ToolItem>
      <ToolItem $w={50} $pad={6}><ToolPlus /></ToolItem>
      <ToolItem $w={40}><ToolMinus /></ToolItem>
      <MoreCaret />
    </Toolbar>
    <MainRow>
      <SideHandle><HandleArrow /></SideHandle>
      <Viewport><CloudView /></Viewport>
      <SideHandle><HandleArrow $right /></SideHandle>
    </MainRow>
    <StatusBar>
      <ResetButton>Reset</ResetButton>
      <StatusText>
        <b>Left-Click:</b> Rotate. <b>Middle-Click:</b> Move X/Y. <b>Right-Click:</b>: Zoom. <b>Shift</b>: More options.
      </StatusText>
      15 fps
    </StatusBar>
  </RvizWindow>
);

export default function App() {
  return (
    <Screen>
      <GlobalStyle />
      <Monitors>
        <FilesPanel />
        <RvizPanel />
      </Monitors>
      <DockRow>
        <DockBar />
        <DockBar offset={-1} />
      </DockRow>
    </Screen>
  );
}
